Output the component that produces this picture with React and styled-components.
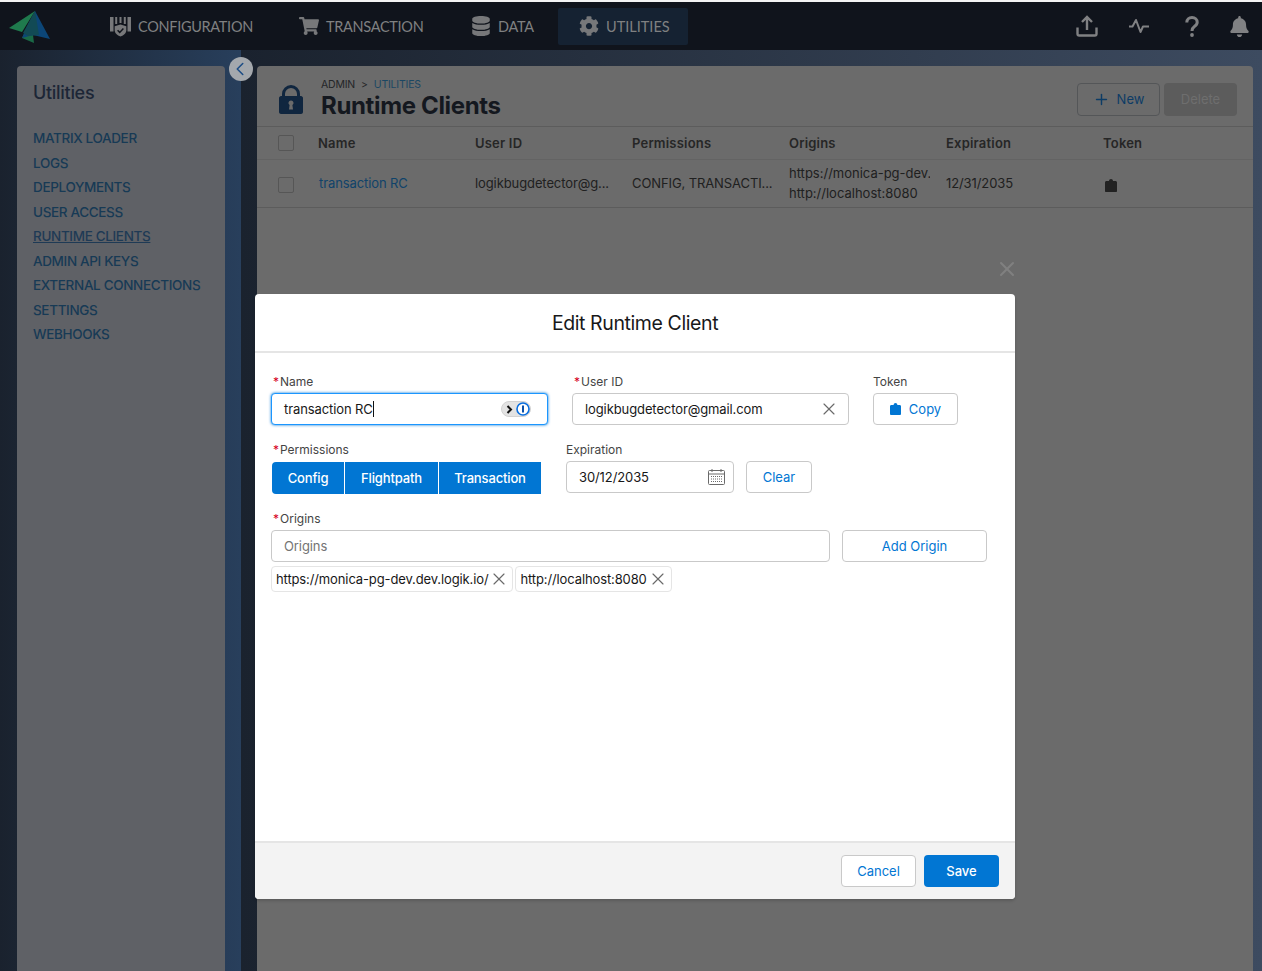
import React from 'react';
import styled, { createGlobalStyle } from 'styled-components';
import { FaShoppingCart, FaDatabase, FaCog, FaBell } from 'react-icons/fa';
import { FiX, FiPlus, FiChevronLeft } from 'react-icons/fi';

const GlobalStyle = createGlobalStyle`
  html, body {
    margin: 0;
    padding: 0;
    height: 971px;
    overflow: hidden;
    background: #6b6b6b;
    font-family: Inter, "Liberation Sans", sans-serif;
  }
  * { box-sizing: border-box; }
`;

const Page = styled.div`
  position: relative;
  width: 1262px;
  height: 971px;
  overflow: hidden;
  border-top: 2px solid #f4f4f4;
  display: flex;
  flex-direction: column;
`;

// Top bar
const TopBar = styled.header`
  height: 48px;
  flex: none;
  background: #10141c;
  display: flex;
  align-items: center;
`;

const LogoSlot = styled.div`
  width: 89px;
  flex: none;
  padding-left: 9px;
  display: flex;
  align-items: center;
  svg { display: block; margin-top: 2px; }
`;

const NavList = styled.nav`
  display: flex;
  gap: 5px;
  align-items: center;
  flex: 1;
`;

const NavItem = styled.div`
  width: ${p => p.$w}px;
  height: 37px;
  padding-left: 21px;
  display: flex;
  align-items: center;
  gap: 7px;
  color: #7f8081;
  border-radius: 2px;
  background: ${p => (p.$active ? '#152232' : 'transparent')};
  font-family: Lato, sans-serif;
  font-size: 14.5px;
  letter-spacing: ${p => (p.$active ? '0' : '-0.3px')};
  white-space: nowrap;
  svg { color: #77787a; flex: none; }
`;

const TopIcons = styled.div`
  display: flex;
  align-items: center;
  color: #808183;
`;

const TopIcon = styled.div`
  width: ${p => p.$w}px;
  display: flex;
  justify-content: center;
  svg { display: block; }
`;

// Page body
const Body = styled.div`
  flex: 1;
  display: flex;
  min-height: 0;
`;

const LeftColumn = styled.div`
  width: 241px;
  flex: none;
  padding: 16px 16px 0 17px;
  background: linear-gradient(90deg, #1a222e 0%, #283f5c 100%);
`;

const RightColumn = styled.div`
  flex: 1;
  padding: 16px 9px 0 16px;
  background: linear-gradient(90deg, #1a222e 0%, #3d4b60 100%);
`;

const SidePanel = styled.aside`
  height: 100%;
  background: #5f6166;
  border-radius: 4px 4px 0 0;
  padding: 14px 16px;
`;

const SideTitle = styled.h2`
  margin: 0 0 20px;
  font-size: 18px;
  line-height: 26px;
  font-weight: 500;
  letter-spacing: -0.3px;
  color: #1c2636;
`;

const SideLink = styled.div`
  height: 24.5px;
  line-height: 24.5px;
  font-size: 13.5px;
  font-weight: 500;
  letter-spacing: -0.35px;
  white-space: nowrap;
  color: ${p => (p.$active ? '#1e3a55' : '#173a55')};
  text-decoration: ${p => (p.$active ? 'underline' : 'none')};
`;

const CollapseButton = styled.div`
  position: absolute;
  left: 229px;
  top: 55px;
  width: 24px;
  height: 24px;
  border-radius: 50%;
  background: #a4a8ad;
  color: #1d4d86;
  display: flex;
  align-items: center;
  justify-content: center;
  svg { margin-left: -2px; }
`;

const MainPanel = styled.main`
  height: 100%;
  background: #6b6b6b;
  border-radius: 4px 4px 0 0;
`;

const PageHeader = styled.div`
  height: 61px;
  padding: 7px 16px 0 22px;
  display: flex;
  align-items: center;
  border-bottom: 1px solid #5c5c5c;
`;

const LockBadge = styled.div`
  width: 24px;
  margin-right: 18px;
  color: #10263f;
  svg { display: block; }
`;

const TitleBlock = styled.div`
  flex: 1;
`;

const Crumbs = styled.div`
  display: flex;
  gap: 6px;
  font-size: 10.5px;
  line-height: 13px;
  letter-spacing: -0.2px;
  color: #242527;
`;

const CrumbLink = styled.span`
  color: #1c4763;
`;

const PageTitle = styled.h1`
  margin: 0;
  font-size: 24px;
  line-height: 30px;
  font-weight: 700;
  letter-spacing: -0.35px;
  color: #14181f;
`;

const HeaderActions = styled.div`
  display: flex;
  gap: 4px;
  margin-top: -1px;
`;

const NewButton = styled.div`
  width: 83px;
  height: 33px;
  border: 1px solid #545658;
  border-radius: 4px;
  display: flex;
  align-items: center;
  justify-content: center;
  gap: 7px;
  font-size: 13px;
  color: #0d3c66;
`;

const DeleteButton = styled.div`
  width: 73px;
  height: 33px;
  border-radius: 4px;
  background: #5c5c5c;
  color: #6e6e6e;
  font-size: 13px;
  display: flex;
  align-items: center;
  justify-content: center;
`;

const TableRow = styled.div`
  display: grid;
  grid-template-columns: 61px repeat(5, 157px) 1fr;
  align-items: center;
  height: ${p => p.$h}px;
  padding-bottom: ${p => (p.$head ? 0 : 1)}px;
  border-bottom: 1px solid ${p => (p.$head ? '#636363' : '#5c5c5c')};
  font-size: 13px;
  color: ${p => (p.$head ? '#262626' : '#202020')};
  font-weight: ${p => (p.$head ? 600 : 400)};
  letter-spacing: ${p => (p.$head ? '0.2px' : '-0.1px')};
`;

const CheckCell = styled.div`
  padding-left: 21px;
  padding-top: ${p => (p.$row ? 3 : 0)}px;
`;

const CheckBox = styled.div`
  width: 16px;
  height: 16px;
  border: 1px solid #565656;
  border-radius: 2px;
`;

const Cell = styled.div`
  overflow: hidden;
  white-space: nowrap;
  padding-right: 16px;
`;

const LinkCell = styled(Cell)`
  color: #10436a;
  padding-left: 1px;
`;

const OriginLines = styled.div`
  width: 141px;
  overflow: hidden;
  white-space: nowrap;
  line-height: 20px;
  letter-spacing: 0;
`;

const TokenIcon = styled.div`
  padding: 4px 0 0 2px;
  color: #222;
  svg { display: block; }
`;

// Modal
const DialogClose = styled.div`
  position: absolute;
  left: 995px;
  top: 255px;
  color: #808080;
  svg { display: block; }
`;

const Modal = styled.section`
  position: absolute;
  left: 255px;
  top: 292px;
  width: 760px;
  height: 605px;
  background: #fff;
  border-radius: 4px;
  box-shadow: 0 2px 3px rgba(0, 0, 0, 0.16);
  display: flex;
  flex-direction: column;
`;

const ModalHeader = styled.div`
  height: 59px;
  flex: none;
  border-bottom: 2px solid #e5e5e5;
  display: flex;
  align-items: center;
  justify-content: center;
  font-size: 19.5px;
  font-weight: 400;
  letter-spacing: -0.4px;
  color: #18181a;
`;

const ModalBody = styled.div`
  flex: 1;
  padding: 21px 16px 0;
  display: flex;
  flex-direction: column;
`;

const FormRow = styled.div`
  display: flex;
  align-items: flex-start;
  gap: ${p => p.$gap || 0}px;
  margin-bottom: ${p => p.$mb || 0}px;
`;

const Field = styled.div`
  width: ${p => p.$w}px;
  flex: none;
`;

const Label = styled.div`
  height: 19px;
  font-size: 12px;
  line-height: 15px;
  color: #444;
  ${p => p.$req && `
    &::before {
      content: '*';
      color: #d6001c;
      margin: 0 1px 0 2px;
    }
  `}
`;

const InputBox = styled.div`
  height: 32px;
  width: ${p => p.$w || '100%'};
  padding: 0 12px;
  border-radius: 4px;
  border: 1px solid ${p => (p.$focus ? '#1b96ff' : '#c9c9c9')};
  box-shadow: ${p => (p.$focus ? '0 0 3px #0176d3' : 'none')};
  background: #fff;
  display: flex;
  align-items: center;
  justify-content: space-between;
  font-size: 13px;
  letter-spacing: -0.1px;
  color: ${p => (p.$placeholder ? '#747474' : '#181818')};
`;

const Caret = styled.span`
  display: inline-block;
  width: 1px;
  height: 16px;
  background: #111;
  vertical-align: -3px;
`;

const PasswordPill = styled.div`
  width: 30px;
  height: 16px;
  border-radius: 8px;
  background: #e3e3e3;
  border: 1px solid #d2d2d2;
  margin-right: 4px;
  display: flex;
  align-items: center;
  justify-content: space-between;
  padding-left: 4px;
  svg { display: block; }
`;

const ClearIcon = styled.div`
  color: #6a6a6a;
  margin-right: -3px;
  svg { display: block; }
`;

const CalendarSlot = styled.div`
  margin-right: -4px;
  svg { display: block; }
`;

const OutlineButton = styled.div`
  height: 32px;
  width: ${p => p.$w}px;
  flex: none;
  border: 1px solid #c9c9c9;
  border-radius: 4px;
  background: #fff;
  color: #0176d3;
  font-size: 13px;
  display: flex;
  align-items: center;
  justify-content: center;
  gap: 8px;
  svg { display: block; }
`;

const SegmentGroup = styled.div`
  display: flex;
  margin: 1px 0 0 1px;
  border-radius: 4px;
  overflow: hidden;
`;

const Segment = styled.div`
  height: 32px;
  width: ${p => p.$w}px;
  background: #0176d3;
  color: #fff;
  font-size: 13px;
  font-weight: 500;
  letter-spacing: -0.15px;
  display: flex;
  align-items: center;
  justify-content: center;
  & + & { border-left: 1px solid #fff; }
`;

const PillRow = styled.div`
  display: flex;
  gap: 2px;
  margin-top: 4px;
`;

const OriginPill = styled.div`
  height: 26px;
  padding: 0 3px 0 4px;
  border: 1px solid #e5e5e5;
  border-radius: 4px;
  display: flex;
  align-items: center;
  gap: 1px;
  font-size: 13px;
  letter-spacing: -0.12px;
  color: #181818;
  svg { display: block; color: #6a6a6a; }
`;

const ModalFooter = styled.div`
  height: 58px;
  flex: none;
  background: #f3f3f3;
  border-top: 2px solid #e5e5e5;
  border-radius: 0 0 4px 4px;
  padding: 0 16px;
  display: flex;
  align-items: center;
  justify-content: flex-end;
  gap: 8px;
`;

const SaveButton = styled.div`
  height: 32px;
  width: 75px;
  border-radius: 4px;
  background: #0176d3;
  color: #fff;
  font-size: 13px;
  font-weight: 500;
  display: flex;
  align-items: center;
  justify-content: center;
`;

const Logo = () => (
  <svg width="41" height="32" viewBox="0 0 41 32">
    <polygon points="26,0 0,17 13,21" fill="#1f7a4d" />
    <polygon points="26,0 13,27 25,32 24,24" fill="#1a6a47" />
    <polygon points="26,0 41,28 24,24 13,27 17,18" fill="#0c4677" />
    <polygon points="26,0 14,22 19,25 30,24" fill="#124a55" />
  </svg>
);

const ConfigIcon = () => (
  <svg width="21" height="21" viewBox="0 0 21 21" fill="currentColor">
    <rect x="0" y="1" width="3.5" height="14.500" />
    <rect x="17.500" y="1" width="3.500" height="14.500" />
    <rect x="5.200" y="1" width="2" height="7" />
    <rect x="9.500" y="1" width="2" height="6" />
    <rect x="13.800" y="1" width="2" height="7" />
    <path d="M10.500 8.500l5.800 1.800v4c0 3-2.500 5.200-5.800 6.200-3.300-1-5.800-3.200-5.800-6.200v-4z" />
    <path d="M7.600 14.300l2.100 2.100 3.700-3.900" stroke="#10141c" strokeWidth="1.500" fill="none" />
  </svg>
);

const UploadIcon = () => (
  <svg width="22" height="22" viewBox="0 0 22 22" fill="none" stroke="currentColor" strokeWidth="2.400">
    <path d="M11 15V2.500M6 7l5-5 5 5" />
    <path d="M1.500 12.500v6.300c0 1 .7 1.700 1.700 1.700h15.600c1 0 1.700-.7 1.700-1.700v-6.300" />
  </svg>
);

const PulseIcon = () => (
  <svg width="22" height="16" viewBox="0 0 22 16" fill="none" stroke="currentColor" strokeWidth="2" strokeLinejoin="round">
    <path d="M1 8.500h3.500L8 2l4.500 12L15 8.500h6" />
  </svg>
);

const QuestionIcon = () => (
  <svg width="14" height="21" viewBox="0 0 14 21" fill="none" stroke="currentColor" strokeWidth="3">
    <path d="M1.800 6.500C1.800 3.500 4 1.600 7 1.600s5.200 1.900 5.200 4.700c0 2-1.200 3.200-2.800 4.300C8 11.600 7 12.600 7 15" />
    <circle cx="7" cy="19" r="1.900" fill="currentColor" stroke="none" />
  </svg>
);

const LockOpenIcon = () => (
  <svg width="24" height="30" viewBox="0 0 24 30" fill="currentColor">
    <path d="M4.500 12V9a7.500 7.500 0 0 1 15 0v3" fill="none" stroke="currentColor" strokeWidth="3" />
    <path d="M2 11h20c1 0 2 1 2 2v14c0 1-1 2-2 2H2c-1 0-2-1-2-2V13c0-1 1-2 2-2z" />
    <path d="M12 15.500a2.500 2.500 0 0 1 1.400 4.600l.6 4.400h-4l.6-4.400a2.500 2.500 0 0 1 1.400-4.600z" fill="#6b6b6b" />
  </svg>
);

const ClipboardIcon = ({ size }) => (
  <svg width={size} height={size + 1} viewBox="0 0 12 13" fill="currentColor">
    <path d="M4 2c0-1.200.9-2 2-2s2 .8 2 2h2.500c.8 0 1.500.7 1.500 1.500V12c0 .6-.4 1-1 1H1c-.6 0-1-.4-1-1V3.500C0 2.700.7 2 1.500 2z" />
  </svg>
);

const CalendarIcon = () => (
  <svg width="17" height="16" viewBox="0 0 17 16" fill="none" stroke="#6a6a6a">
    <rect x=".5" y="1.500" width="16" height="14" rx="1" />
    <path d="M.5 5h16M4 0v3M13 0v3" />
    <path d="M3 7.500h11M3 10h11M3 12.500h11" strokeDasharray="1 1" />
  </svg>
);

const CloseGlyph = () => <FiX size={20} strokeWidth={1.4} />;

const sideLinks = [
  'MATRIX LOADER',
  'LOGS',
  'DEPLOYMENTS',
  'USER ACCESS',
  'RUNTIME CLIENTS',
  'ADMIN API KEYS',
  'EXTERNAL CONNECTIONS',
  'SETTINGS',
  'WEBHOOKS',
];

const App = () => (
  <Page>
    <GlobalStyle />
    <TopBar>
      <LogoSlot><Logo /></LogoSlot>
      <NavList>
        <NavItem $w={184}><ConfigIcon />CONFIGURATION</NavItem>
        <NavItem $w={167}><FaShoppingCart size={20} />TRANSACTION</NavItem>
        <NavItem $w={103}><FaDatabase size={20} />DATA</NavItem>
        <NavItem $w={130} $active><FaCog size={20} />UTILITIES</NavItem>
      </NavList>
      <TopIcons>
        <TopIcon $w={48}><UploadIcon /></TopIcon>
        <TopIcon $w={56}><PulseIcon /></TopIcon>
        <TopIcon $w={49}><QuestionIcon /></TopIcon>
        <TopIcon $w={46}><FaBell size={21} /></TopIcon>
      </TopIcons>
    </TopBar>

    <Body>
      <LeftColumn>
        <SidePanel>
          <SideTitle>Utilities</SideTitle>
          {sideLinks.map(link => (
            <SideLink key={link} $active={link === 'RUNTIME CLIENTS'}>{link}</SideLink>
          ))}
        </SidePanel>
      </LeftColumn>
      <RightColumn>
        <MainPanel>
          <PageHeader>
            <LockBadge><LockOpenIcon /></LockBadge>
            <TitleBlock>
              <Crumbs>ADMIN <span>&gt;</span> <CrumbLink>UTILITIES</CrumbLink></Crumbs>
              <PageTitle>Runtime Clients</PageTitle>
            </TitleBlock>
            <HeaderActions>
              <NewButton><FiPlus size={17} />New</NewButton>
              <DeleteButton>Delete</DeleteButton>
            </HeaderActions>
          </PageHeader>
          <TableRow $head $h={33}>
            <CheckCell><CheckBox /></CheckCell>
            <Cell>Name</Cell>
            <Cell>User ID</Cell>
            <Cell>Permissions</Cell>
            <Cell>Origins</Cell>
            <Cell>Expiration</Cell>
            <Cell>Token</Cell>
          </TableRow>
          <TableRow $h={48}>
            <CheckCell $row><CheckBox /></CheckCell>
            <LinkCell>transaction RC</LinkCell>
            <Cell>logikbugdetector@g...</Cell>
            <Cell>CONFIG, TRANSACTI...</Cell>
            <OriginLines>https://monica-pg-dev.dev.logik.io/<br />http://localhost:8080</OriginLines>
            <Cell>12/31/2035</Cell>
            <TokenIcon><ClipboardIcon size={12} /></TokenIcon>
          </TableRow>
        </MainPanel>
      </RightColumn>
    </Body>

    <CollapseButton><FiChevronLeft size={22} strokeWidth={1.7} /></CollapseButton>
    <DialogClose><FiX size={24} /></DialogClose>

    <Modal>
      <ModalHeader>Edit Runtime Client</ModalHeader>
      <ModalBody>
        <FormRow $gap={24} $mb={17}>
          <Field $w={277}>
            <Label $req>Name</Label>
            <InputBox $focus>
              <span>transaction RC<Caret /></span>
              <PasswordPill>
                <svg width="7" height="9" viewBox="0 0 7 9" fill="none" stroke="#111" strokeWidth="2"><path d="M1.500 1l3.500 3.500L1.500 8" /></svg>
                <svg width="14" height="14" viewBox="0 0 14 14">
                  <circle cx="7" cy="7" r="6" fill="#fff" stroke="#0a6fe0" strokeWidth="1.600" />
                  <rect x="6" y="3.500" width="2" height="7" fill="#0a4fa8" />
                </svg>
              </PasswordPill>
            </InputBox>
          </Field>
          <Field $w={277}>
            <Label $req>User ID</Label>
            <InputBox>
              logikbugdetector@gmail.com
              <ClearIcon><CloseGlyph /></ClearIcon>
            </InputBox>
          </Field>
          <Field $w={85}>
            <Label>Token</Label>
            <OutlineButton $w={85}><ClipboardIcon size={11} />Copy</OutlineButton>
          </Field>
        </FormRow>

        <FormRow $mb={17}>
          <Field $w={295}>
            <Label $req>Permissions</Label>
            <SegmentGroup>
              <Segment $w={72}>Config</Segment>
              <Segment $w={94}>Flightpath</Segment>
              <Segment $w={103}>Transaction</Segment>
            </SegmentGroup>
          </Field>
          <Field $w={246}>
            <Label>Expiration</Label>
            <FormRow $gap={12}>
              <InputBox $w="168px">30/12/2035<CalendarSlot><CalendarIcon /></CalendarSlot></InputBox>
              <OutlineButton $w={66}>Clear</OutlineButton>
            </FormRow>
          </Field>
        </FormRow>

        <Label $req>Origins</Label>
        <FormRow $gap={12}>
          <InputBox $w="559px" $placeholder>Origins</InputBox>
          <OutlineButton $w={145}>Add Origin</OutlineButton>
        </FormRow>
        <PillRow>
          <OriginPill>https://monica-pg-dev.dev.logik.io/<CloseGlyph /></OriginPill>
          <OriginPill>http://localhost:8080<CloseGlyph /></OriginPill>
        </PillRow>
      </ModalBody>
      <ModalFooter>
        <OutlineButton $w={75}>Cancel</OutlineButton>
        <SaveButton>Save</SaveButton>
      </ModalFooter>
    </Modal>
  </Page>
);

export default App;
